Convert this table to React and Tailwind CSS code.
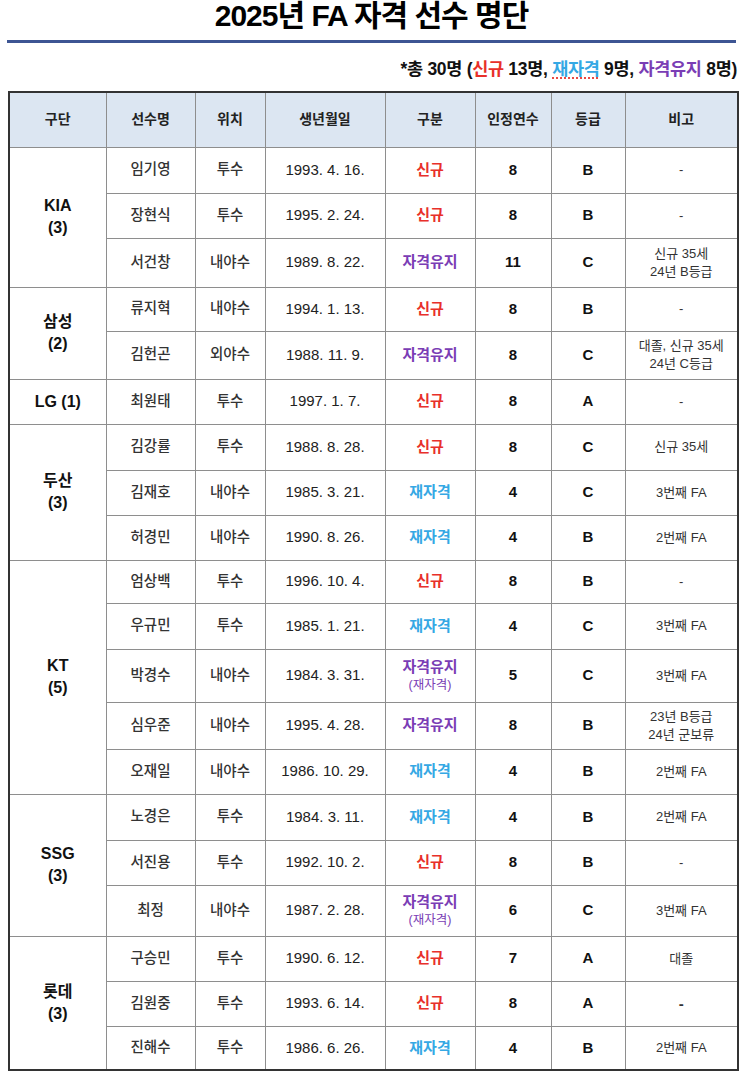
import React from "react";

const teams = [
  {
    team: "KIA",
    count: "(3)",
    players: [
      { name: "임기영", pos: "투수", birth: "1993. 4. 16.", type: "new", years: "8", grade: "B", note: ["-"], h: "h-[46px]" },
      { name: "장현식", pos: "투수", birth: "1995. 2. 24.", type: "new", years: "8", grade: "B", note: ["-"], h: "h-[45px]" },
      { name: "서건창", pos: "내야수", birth: "1989. 8. 22.", type: "keep", years: "11", grade: "C", note: ["신규 35세", "24년 B등급"], h: "h-[49px]" },
    ],
  },
  {
    team: "삼성",
    count: "(2)",
    players: [
      { name: "류지혁", pos: "내야수", birth: "1994. 1. 13.", type: "new", years: "8", grade: "B", note: ["-"], h: "h-[44px]" },
      { name: "김헌곤", pos: "외야수", birth: "1988. 11. 9.", type: "keep", years: "8", grade: "C", note: ["대졸, 신규 35세", "24년 C등급"], h: "h-[48px]" },
    ],
  },
  {
    team: "LG (1)",
    count: null,
    players: [
      { name: "최원태", pos: "투수", birth: "1997. 1. 7.", type: "new", years: "8", grade: "A", note: ["-"], h: "h-[45px]" },
    ],
  },
  {
    team: "두산",
    count: "(3)",
    players: [
      { name: "김강률", pos: "투수", birth: "1988. 8. 28.", type: "new", years: "8", grade: "C", note: ["신규 35세"], h: "h-[46px]" },
      { name: "김재호", pos: "내야수", birth: "1985. 3. 21.", type: "re", years: "4", grade: "C", note: ["3번째 FA"], h: "h-[45px]" },
      { name: "허경민", pos: "내야수", birth: "1990. 8. 26.", type: "re", years: "4", grade: "B", note: ["2번째 FA"], h: "h-[45px]" },
    ],
  },
  {
    team: "KT",
    count: "(5)",
    players: [
      { name: "엄상백", pos: "투수", birth: "1996. 10. 4.", type: "new", years: "8", grade: "B", note: ["-"], h: "h-[43px]" },
      { name: "우규민", pos: "투수", birth: "1985. 1. 21.", type: "re", years: "4", grade: "C", note: ["3번째 FA"], h: "h-[46px]" },
      { name: "박경수", pos: "내야수", birth: "1984. 3. 31.", type: "keepre", years: "5", grade: "C", note: ["3번째 FA"], h: "h-[53px]" },
      { name: "심우준", pos: "내야수", birth: "1995. 4. 28.", type: "keep", years: "8", grade: "B", note: ["23년 B등급", "24년 군보류"], h: "h-[47px]" },
      { name: "오재일", pos: "내야수", birth: "1986. 10. 29.", type: "re", years: "4", grade: "B", note: ["2번째 FA"], h: "h-[45px]" },
    ],
  },
  {
    team: "SSG",
    count: "(3)",
    players: [
      { name: "노경은", pos: "투수", birth: "1984. 3. 11.", type: "re", years: "4", grade: "B", note: ["2번째 FA"], h: "h-[46px]" },
      { name: "서진용", pos: "투수", birth: "1992. 10. 2.", type: "new", years: "8", grade: "B", note: ["-"], h: "h-[45px]" },
      { name: "최정", pos: "내야수", birth: "1987. 2. 28.", type: "keepre", years: "6", grade: "C", note: ["3번째 FA"], h: "h-[51px]" },
    ],
  },
  {
    team: "롯데",
    count: "(3)",
    players: [
      { name: "구승민", pos: "투수", birth: "1990. 6. 12.", type: "new", years: "7", grade: "A", note: ["대졸"], h: "h-[45px]" },
      { name: "김원중", pos: "투수", birth: "1993. 6. 14.", type: "new", years: "8", grade: "A", note: ["-"], h: "h-[45px]", boldDash: true },
      { name: "진해수", pos: "투수", birth: "1986. 6. 26.", type: "re", years: "4", grade: "B", note: ["2번째 FA"], h: "h-[44px]" },
    ],
  },
];

const headers = ["구단", "선수명", "위치", "생년월일", "구분", "인정연수", "등급", "비고"];

function TypeLabel({ type }) {
  if (type === "new") {
    return <span className="font-bold text-[#e8302a]">신규</span>;
  }
  if (type === "re") {
    return <span className="font-bold text-[#35a8e4]">재자격</span>;
  }
  if (type === "keep") {
    return <span className="font-bold text-[#7a3db5]">자격유지</span>;
  }
  return (
    <div className="flex flex-col items-center leading-[19px]">
      <span className="font-bold text-[#7a3db5]">자격유지</span>
      <span className="text-[12.5px] text-[#7a3db5]">(재자격)</span>
    </div>
  );
}

const cell = "border border-[#8e8e8e] text-center align-middle p-0";

export default function App() {
  return (
    <div
      className="w-[743px] h-[1077px] bg-white text-[#222]"
      style={{ fontFamily: '"Liberation Sans", "Noto Sans CJK KR", sans-serif' }}
    >
      <h1 className="h-[34px] text-center text-[30px] font-bold leading-[32px] tracking-[-1px] text-black">
        2025년 FA 자격 선수 명단
      </h1>

      <div className="mx-[7px] mt-[6px] h-[3px] bg-[#3d5593]" />

      <p className="mt-[15px] pr-[6px] text-right text-[17.5px] font-bold leading-[22px] tracking-[-0.3px] text-[#111]">
        *총 30명 (<span className="text-[#e8302a]">신규</span> 13명,{" "}
        <span className="text-[#35a8e4] underline decoration-dotted decoration-[#e8302a] underline-offset-[3px]">
          재자격
        </span>{" "}
        9명, <span className="text-[#7a3db5]">자격유지</span> 8명)
      </p>

      <table className="ml-[8px] mt-[11px] w-[729px] table-fixed border-collapse border-2 border-[#333]">
        <colgroup>
          <col className="w-[97px]" />
          <col className="w-[89px]" />
          <col className="w-[70px]" />
          <col className="w-[120px]" />
          <col className="w-[90px]" />
          <col className="w-[76px]" />
          <col className="w-[74px]" />
          <col className="w-[113px]" />
        </colgroup>
        <thead>
          <tr className="h-[55px] bg-[#dce6f2]">
            {headers.map((h) => (
              <th key={h} className={`${cell} text-[14px] font-bold text-[#222]`}>
                {h}
              </th>
            ))}
          </tr>
        </thead>
        <tbody>
          {teams.map((t) =>
            t.players.map((p, i) => (
              <tr key={p.name} className={p.h}>
                {i === 0 && (
                  <td
                    rowSpan={t.players.length}
                    className={`${cell} text-[16px] font-bold leading-[22px] text-[#111]`}
                  >
                    <div>{t.team}</div>
                    {t.count && <div>{t.count}</div>}
                  </td>
                )}
                <td className={`${cell} text-[14.5px] font-medium text-[#333]`}>{p.name}</td>
                <td className={`${cell} text-[14.5px] font-medium text-[#333]`}>{p.pos}</td>
                <td className={`${cell} text-[15px] text-[#222]`}>{p.birth}</td>
                <td className={`${cell} text-[15px]`}>
                  <TypeLabel type={p.type} />
                </td>
                <td className={`${cell} text-[15px] font-bold text-[#111]`}>{p.years}</td>
                <td className={`${cell} text-[15px] font-bold text-[#111]`}>{p.grade}</td>
                <td
                  className={`${cell} ${
                    p.boldDash ? "text-[15px] font-bold" : "text-[13px]"
                  } leading-[18px] text-[#333]`}
                >
                  {p.note.map((n) => (
                    <div key={n}>{n}</div>
                  ))}
                </td>
              </tr>
            ))
          )}
        </tbody>
      </table>
    </div>
  );
}
